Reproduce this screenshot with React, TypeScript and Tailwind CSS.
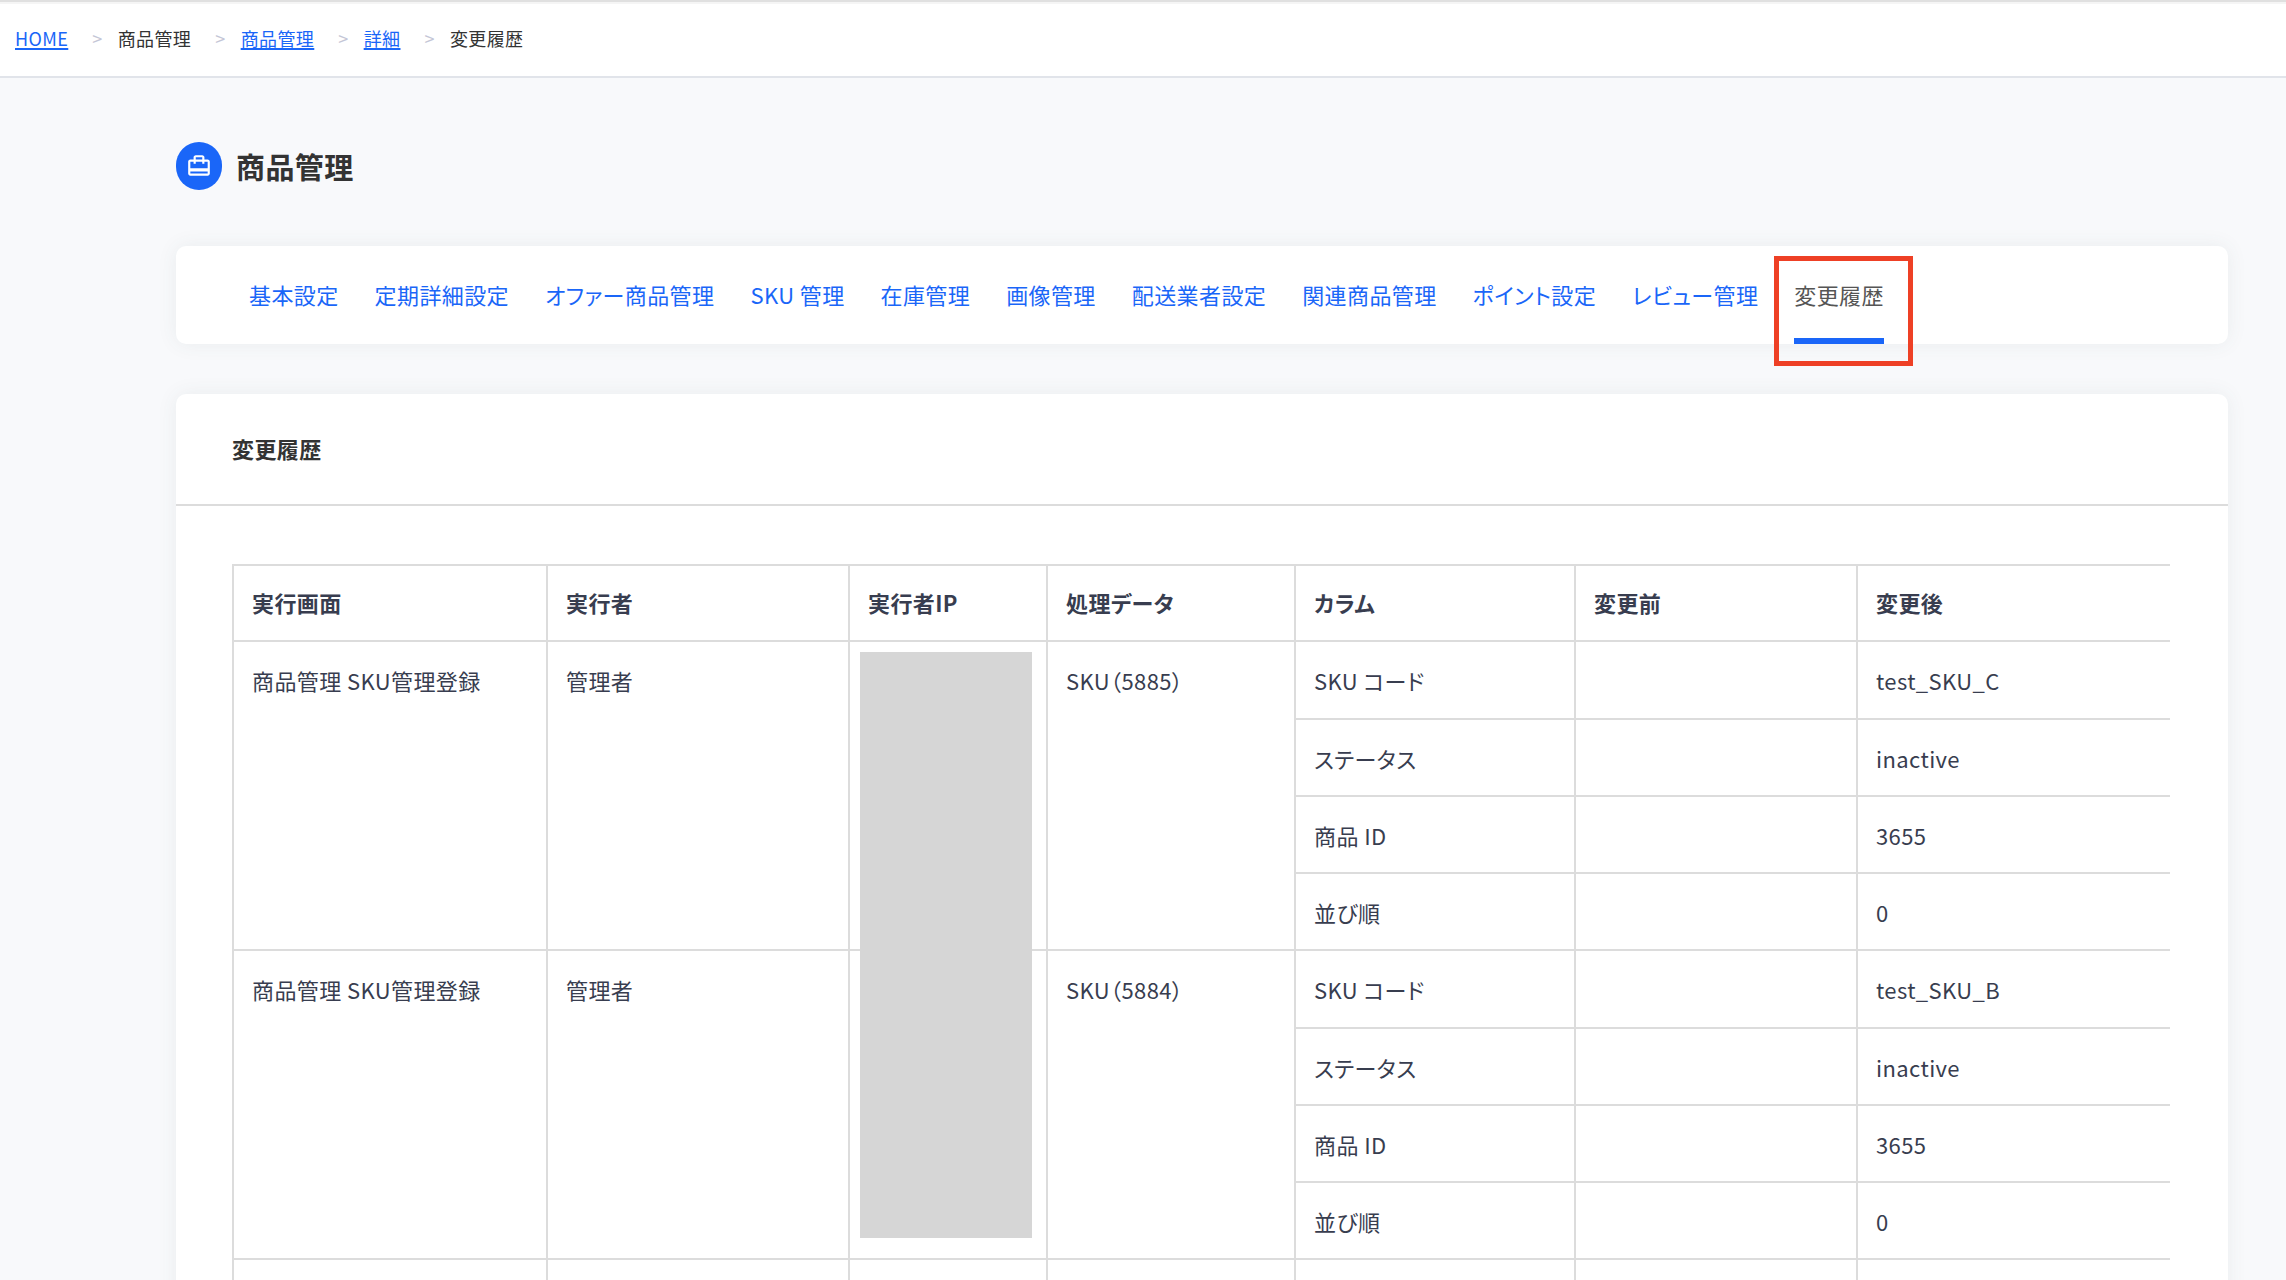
import { Fragment } from 'react'
import { MdCardTravel } from 'react-icons/md'

interface Crumb {
  label: string
  href?: string
}

interface Change {
  column: string
  before: string
  after: string
}

interface HistoryEntry {
  screen: string
  operator: string
  target: string
  changes: Change[]
}

const crumbs: Crumb[] = [
  { label: 'HOME', href: '#home' },
  { label: '商品管理' },
  { label: '商品管理', href: '#products' },
  { label: '詳細', href: '#detail' },
  { label: '変更履歴' },
]

const tabs = [
  '基本設定',
  '定期詳細設定',
  'オファー商品管理',
  'SKU 管理',
  '在庫管理',
  '画像管理',
  '配送業者設定',
  '関連商品管理',
  'ポイント設定',
  'レビュー管理',
]

const history: HistoryEntry[] = [
  {
    screen: '商品管理 SKU管理登録',
    operator: '管理者',
    target: 'SKU（5885）',
    changes: [
      { column: 'SKU コード', before: '', after: 'test_SKU_C' },
      { column: 'ステータス', before: '', after: 'inactive' },
      { column: '商品 ID', before: '', after: '3655' },
      { column: '並び順', before: '', after: '0' },
    ],
  },
  {
    screen: '商品管理 SKU管理登録',
    operator: '管理者',
    target: 'SKU（5884）',
    changes: [
      { column: 'SKU コード', before: '', after: 'test_SKU_B' },
      { column: 'ステータス', before: '', after: 'inactive' },
      { column: '商品 ID', before: '', after: '3655' },
      { column: '並び順', before: '', after: '0' },
    ],
  },
]

const headings = ['実行画面', '実行者', '実行者IP', '処理データ', 'カラム', '変更前', '変更後']

const headCell = 'border-2 border-[#dcdcdc] px-[18px] pt-[21px] text-left align-top'
const cell = 'border-2 border-[#dcdcdc] px-[18px] pt-[23px] text-left align-top'

function Breadcrumb() {
  return (
    <nav className="border-t-2 border-b-2 border-t-[#e0e0e0] border-b-[#e1e4ea] bg-white px-[15px] pt-[21px] pb-[23px] shadow-[inset_0_2px_0_#f5f5f5]">
      <ol className="flex items-center text-[18px] leading-[30px]">
        {crumbs.map((crumb, i) => (
          <Fragment key={i}>
            {i > 0 && (
              <li aria-hidden="true" className="mr-[15px] ml-6 text-[#c4c6d6]">
                &gt;
              </li>
            )}
            <li>
              {crumb.href ? (
                <a href={crumb.href} className="text-[#1a66f8] underline decoration-2 underline-offset-2">
                  {crumb.label}
                </a>
              ) : (
                crumb.label
              )}
            </li>
          </Fragment>
        ))}
      </ol>
    </nav>
  )
}

function Tabs() {
  return (
    <nav className="flex h-[98px] gap-9 rounded-[10px] bg-white px-[73px] text-[22px] leading-[30px] whitespace-nowrap shadow-[0_0_20px_rgba(60,90,90,0.08)]">
      {tabs.map((tab) => (
        <a key={tab} href={`#${tab}`} className="flex items-center pb-[2px] text-[#1a66f8]">
          {tab}
        </a>
      ))}
      <a
        href="#history"
        aria-current="page"
        className="relative flex items-center border-b-[6px] border-[#1a66f8] pt-1 text-[#555]"
      >
        変更履歴
        {/* callout around the current tab */}
        <span className="absolute top-[10px] -right-[29px] -bottom-7 -left-5 border-5 border-[#ee4025]" />
      </a>
    </nav>
  )
}

function HistoryTable() {
  return (
    <div className="overflow-hidden">
      <table className="w-[2200px] table-fixed border-collapse text-[22px] leading-[30px] text-[#383d4f]">
        <colgroup>
          <col className="w-[314px]" />
          <col className="w-[302px]" />
          <col className="w-[198px]" />
          <col className="w-[248px]" />
          <col className="w-[280px]" />
          <col className="w-[282px]" />
          <col />
        </colgroup>
        <thead>
          <tr className="h-[76px]">
            {headings.map((heading) => (
              <th key={heading} scope="col" className={headCell}>
                {heading}
              </th>
            ))}
          </tr>
        </thead>
        <tbody>
          {history.map((entry, n) =>
            entry.changes.map((change, i) => (
              <tr key={`${n}-${i}`} className={i === 0 ? 'h-[78px]' : 'h-[77px]'}>
                {i === 0 && (
                  <>
                    <td rowSpan={entry.changes.length} className={cell}>
                      {entry.screen}
                    </td>
                    <td rowSpan={entry.changes.length} className={cell}>
                      {entry.operator}
                    </td>
                    <td rowSpan={entry.changes.length} className={`relative ${cell}`}>
                      {/* IP addresses are masked */}
                      {n === 0 && (
                        <div className="absolute top-[10px] left-[10px] z-10 h-[586px] w-[172px] bg-[#d6d6d6]" />
                      )}
                    </td>
                    <td rowSpan={entry.changes.length} className={cell}>
                      {entry.target}
                    </td>
                  </>
                )}
                <td className={cell}>{change.column}</td>
                <td className={cell}>{change.before}</td>
                <td className={cell}>{change.after}</td>
              </tr>
            ))
          )}
          <tr className="h-[77px]">
            {headings.map((heading) => (
              <td key={heading} className={cell} />
            ))}
          </tr>
        </tbody>
      </table>
    </div>
  )
}

export default function App() {
  return (
    <div
      lang="ja"
      className="flex h-screen flex-col overflow-hidden bg-[#f8f9fb] font-['Noto_Sans_CJK_JP',sans-serif] tracking-wide text-[#333] [font-feature-settings:'palt']"
    >
      <Breadcrumb />

      <main className="min-h-0 flex-1 pt-16 pr-[58px] pl-44">
        <div className="mb-14 flex items-center gap-[14px]">
          <span className="flex h-12 w-[46px] items-center justify-center rounded-full bg-[#1a66f8] text-white">
            <MdCardTravel className="size-[26px]" />
          </span>
          <h1 className="text-[29px] leading-10 font-bold">商品管理</h1>
        </div>

        <Tabs />

        <section className="mt-[50px] rounded-[10px] bg-white shadow-[0_0_20px_rgba(60,90,90,0.08)]">
          <div className="border-b-2 border-[#dcdcdc] px-14 pt-[39px] pb-[41px]">
            <h2 className="text-[22px] leading-[30px] font-bold">変更履歴</h2>
          </div>
          <div className="pt-[58px] pr-[58px] pb-14 pl-14">
            <HistoryTable />
          </div>
        </section>
      </main>
    </div>
  )
}
